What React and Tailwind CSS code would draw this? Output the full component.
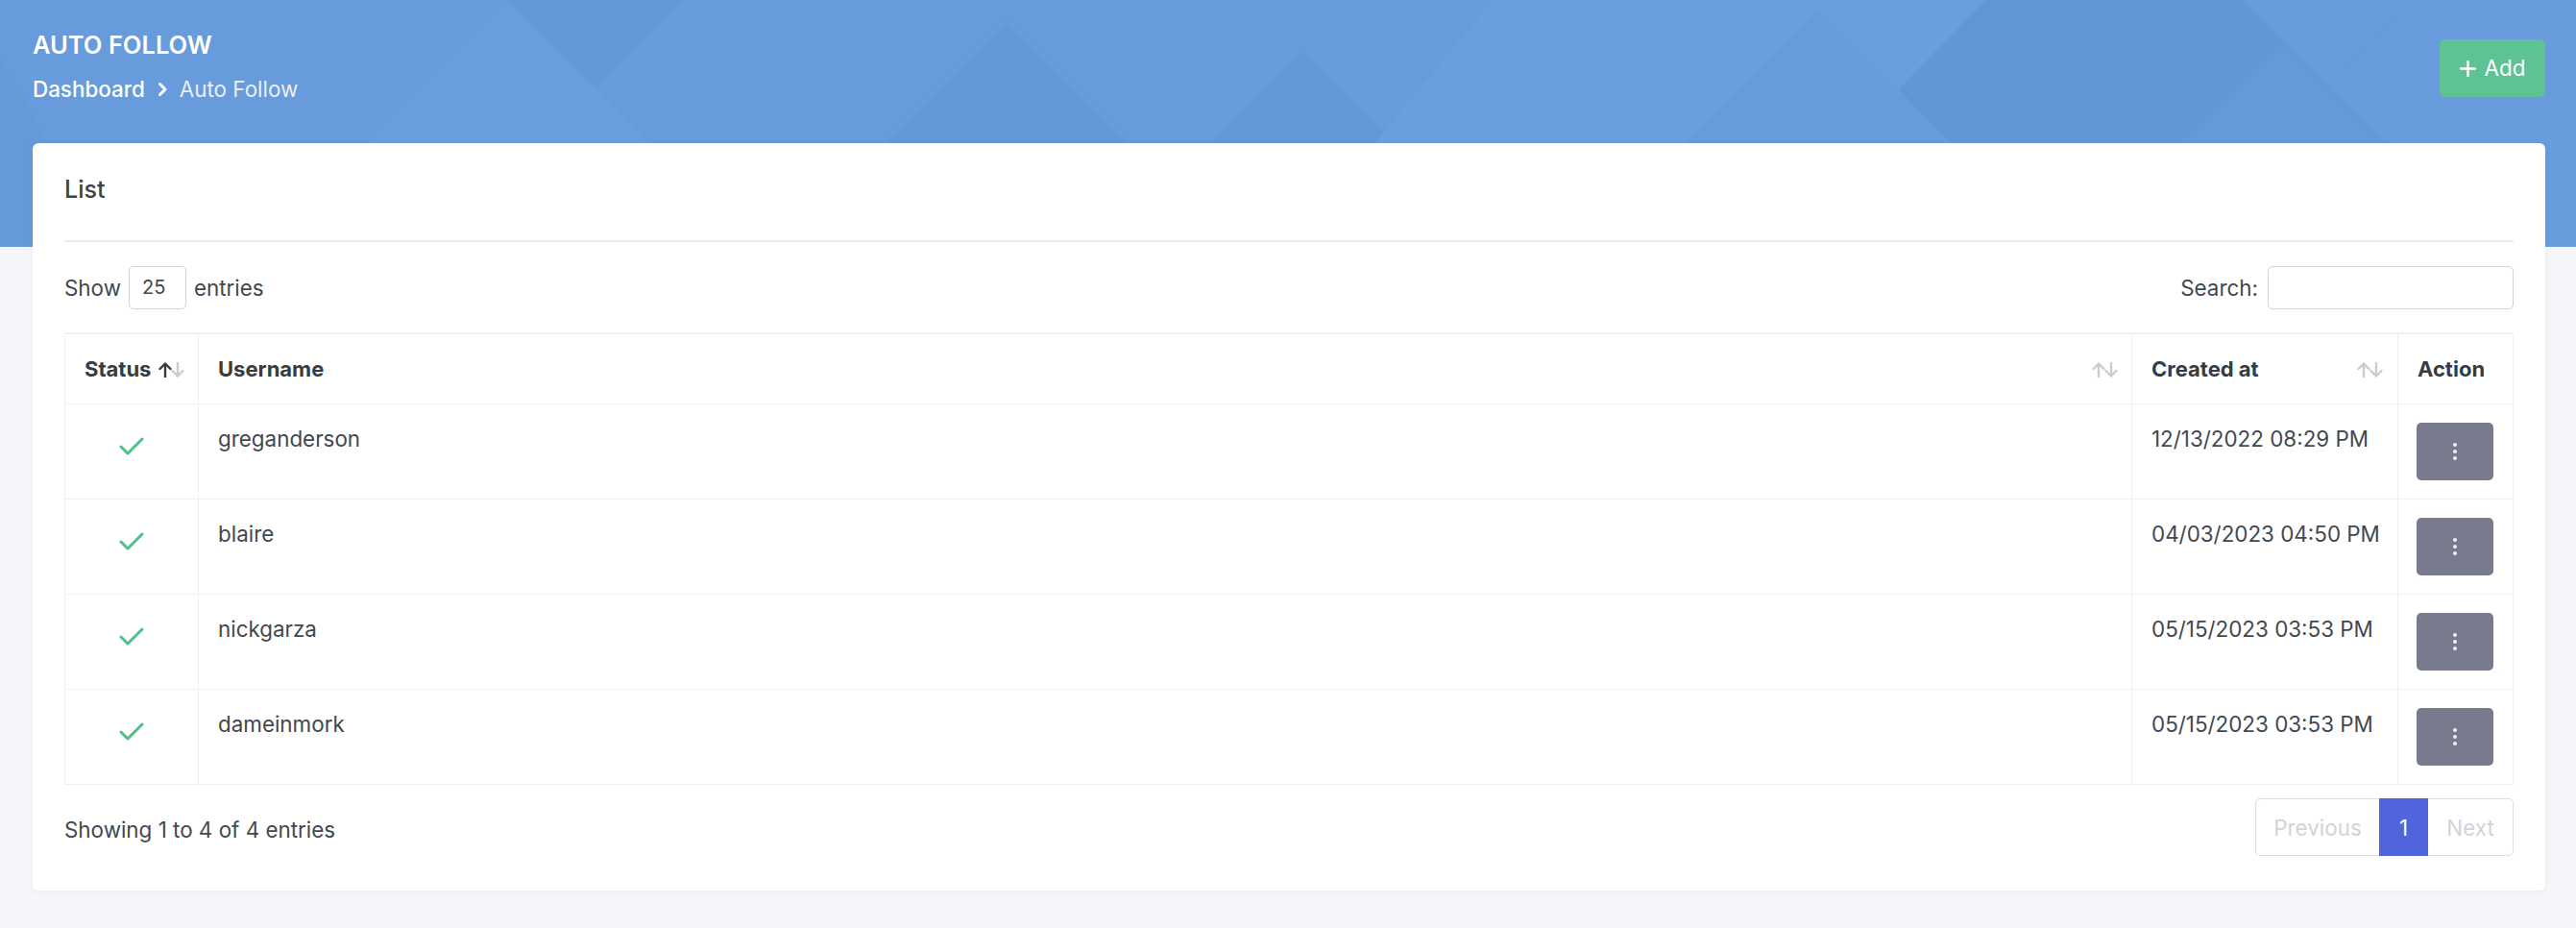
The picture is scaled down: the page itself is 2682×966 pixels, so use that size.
import React from 'react';

const rows = [
  { username: 'greganderson', created: '12/13/2022 08:29 PM' },
  { username: 'blaire', created: '04/03/2023 04:50 PM' },
  { username: 'nickgarza', created: '05/15/2023 03:53 PM' },
  { username: 'dameinmork', created: '05/15/2023 03:53 PM' },
];

// Background triangles of the blue header band
const HeaderPattern = () => (
  <svg className="absolute inset-0 h-full w-full" viewBox="0 0 2682 257" preserveAspectRatio="none">
    <polygon points="0,60 110,257 0,257" fill="#6599d9" />
    <polygon points="529,3 275,257 783,257" fill="#6a9ede" />
    <polygon points="529,0 710,0 620,91" fill="#6498d8" />
    <polygon points="1048,23 814,257 1282,257" fill="#6498d8" />
    <polygon points="1355,54 1152,257 1558,257" fill="#6397d7" />
    <polygon points="1554,0 2067,0 1977,93 2137,257 1342,257" fill="#6a9ede" />
    <polygon points="1893,10 1646,257 2140,257" fill="#679bdb" />
    <polygon points="2068,0 2335,0 2592,257 2137,257 1977,93" fill="#6296d6" />
    <polygon points="2376,43 2162,257 2590,257" fill="#6599d9" />
    <polygon points="2520,0 2682,0 2682,257 2592,257 2427,92" fill="#699cdd" />
  </svg>
);

const SortIcon = ({ active = false }) => (
  <svg width="27" height="16" viewBox="0 0 27 16" fill="none" strokeWidth="2.4" strokeLinecap="round" strokeLinejoin="round">
    <g stroke={active ? '#373c42' : '#c9ccd1'}>
      <path d="M7 15.5V1.5M1.5 7L7 1.5L12.5 7" />
    </g>
    <g stroke="#c9ccd1">
      <path d="M20 0.5V14.5M14.5 9L20 14.5L25.5 9" />
    </g>
  </svg>
);

const Check = () => (
  <svg className="mx-auto mt-[15px] block" width="26" height="19" viewBox="0 0 26 19" fill="none">
    <polyline points="2,10 9,17 24,2" stroke="#4fbf8c" strokeWidth="3" strokeLinecap="round" strokeLinejoin="round" />
  </svg>
);

const KebabButton = () => (
  <button className="flex h-[60px] w-[80px] flex-col items-center justify-center gap-[2.5px] rounded-[5px] bg-[#777b8d]">
    <span className="h-[4.5px] w-[4.5px] rounded-full bg-[#eef0f4]" />
    <span className="h-[4.5px] w-[4.5px] rounded-full bg-[#eef0f4]" />
    <span className="h-[4.5px] w-[4.5px] rounded-full bg-[#eef0f4]" />
  </button>
);

const thBase = 'border border-t-2 border-[#eef0f2] pt-[20px] pb-[19px] text-left align-middle text-[22px] leading-[33px] font-bold text-[#373c42] whitespace-nowrap';
const tdBase = 'border border-[#eef0f2] py-[19px] align-top text-[22.4px] leading-[33px] text-[#43484e] whitespace-nowrap';

export default function App() {
  return (
    <div className="min-h-screen bg-[#f5f6fa] font-[Inter,'Noto_Sans',sans-serif]">
      {/* Header */}
      <div className="relative h-[257px] overflow-hidden bg-[#679bdb]">
        <HeaderPattern />
        <div className="relative flex items-start justify-between pl-[34px] pr-[32px] pt-[31px]">
          <div>
            <h1 className="text-[25.5px] leading-[32px] font-semibold text-white">AUTO FOLLOW</h1>
            <nav className="mt-[16px] flex items-center text-[22.4px] leading-[28px] text-white">
              <span className="font-medium">Dashboard</span>
              <svg className="mx-[13px]" width="10" height="14" viewBox="0 0 10 14" fill="none">
                <path d="M2.5 1.5L8 7L2.5 12.5" stroke="#ffffff" strokeWidth="3" strokeLinecap="round" strokeLinejoin="round" />
              </svg>
              <span className="text-[#e8eef8]">Auto Follow</span>
            </nav>
          </div>
          <button className="mt-[10px] flex h-[60px] w-[110px] items-center justify-center gap-[9px] rounded-[6px] bg-[#5dc294] text-[22.4px] leading-[28px] text-white">
            <svg width="17" height="17" viewBox="0 0 17 17" fill="none">
              <path d="M8.5 1V16M1 8.5H16" stroke="#ffffff" strokeWidth="2.4" strokeLinecap="round" />
            </svg>
            <span>Add</span>
          </button>
        </div>
      </div>

      {/* Card */}
      <div className="relative -mt-[108px] ml-[34px] mr-[32px] rounded-[6px] bg-white px-[33px] pt-[33px] pb-[36px] shadow-[0_1px_6px_rgba(0,0,0,0.05)]">
        <div className="border-b-2 border-[#e9eaec] pb-[38px] text-[25px] leading-[30px] font-medium text-[#3e4348]">List</div>

        <div className="mt-[25px] flex h-[45px] items-center justify-between text-[22.4px] leading-[33px] text-[#43484e]">
          <div className="flex items-center gap-[8px]">
            <span>Show</span>
            <div className="flex h-[45px] w-[60px] items-center rounded-[5px] border border-[#ced4da] pl-[13px] text-[20px]">25</div>
            <span>entries</span>
          </div>
          <div className="flex items-center gap-[10px]">
            <span>Search:</span>
            <input className="h-[45px] w-[256px] rounded-[5px] border border-[#ced4da] outline-none" />
          </div>
        </div>

        <table className="mt-[24px] w-full table-fixed border-collapse">
          <colgroup>
            <col className="w-[139px]" />
            <col />
            <col className="w-[277px]" />
            <col className="w-[120px]" />
          </colgroup>
          <thead>
            <tr>
              <th className={`${thBase} pl-[20px] pr-[14px]`}>
                <div className="flex items-center justify-between">
                  <span>Status</span>
                  <SortIcon active />
                </div>
              </th>
              <th className={`${thBase} pl-[20px] pr-[14px]`}>
                <div className="flex items-center justify-between">
                  <span>Username</span>
                  <SortIcon />
                </div>
              </th>
              <th className={`${thBase} pl-[20px] pr-[15px]`}>
                <div className="flex items-center justify-between">
                  <span>Created at</span>
                  <SortIcon />
                </div>
              </th>
              <th className={`${thBase} px-[20px]`}>Action</th>
            </tr>
          </thead>
          <tbody>
            {rows.map((row) => (
              <tr key={row.username}>
                <td className={`${tdBase} px-[20px] text-center`}>
                  <Check />
                </td>
                <td className={`${tdBase} px-[20px]`}>{row.username}</td>
                <td className={`${tdBase} pl-[20px] pr-[8px]`}>{row.created}</td>
                <td className={`${tdBase} px-[19px]`}>
                  <KebabButton />
                </td>
              </tr>
            ))}
          </tbody>
        </table>

        <div className="mt-[14px] flex items-center justify-between text-[22.4px] leading-[33px] text-[#43484e]">
          <span className="pt-[5px]">Showing 1 to 4 of 4 entries</span>
          <div className="flex h-[60px]">
            <div className="flex w-[129px] items-center justify-center rounded-l-[5px] border-y border-l border-[#dcdee2] text-[#cfd4da]">Previous</div>
            <div className="flex w-[51px] items-center justify-center bg-[#5064dc] text-white">1</div>
            <div className="flex w-[89px] items-center justify-center rounded-r-[5px] border-y border-r border-[#dcdee2] text-[#cfd4da]">Next</div>
          </div>
        </div>
      </div>
    </div>
  );
}
